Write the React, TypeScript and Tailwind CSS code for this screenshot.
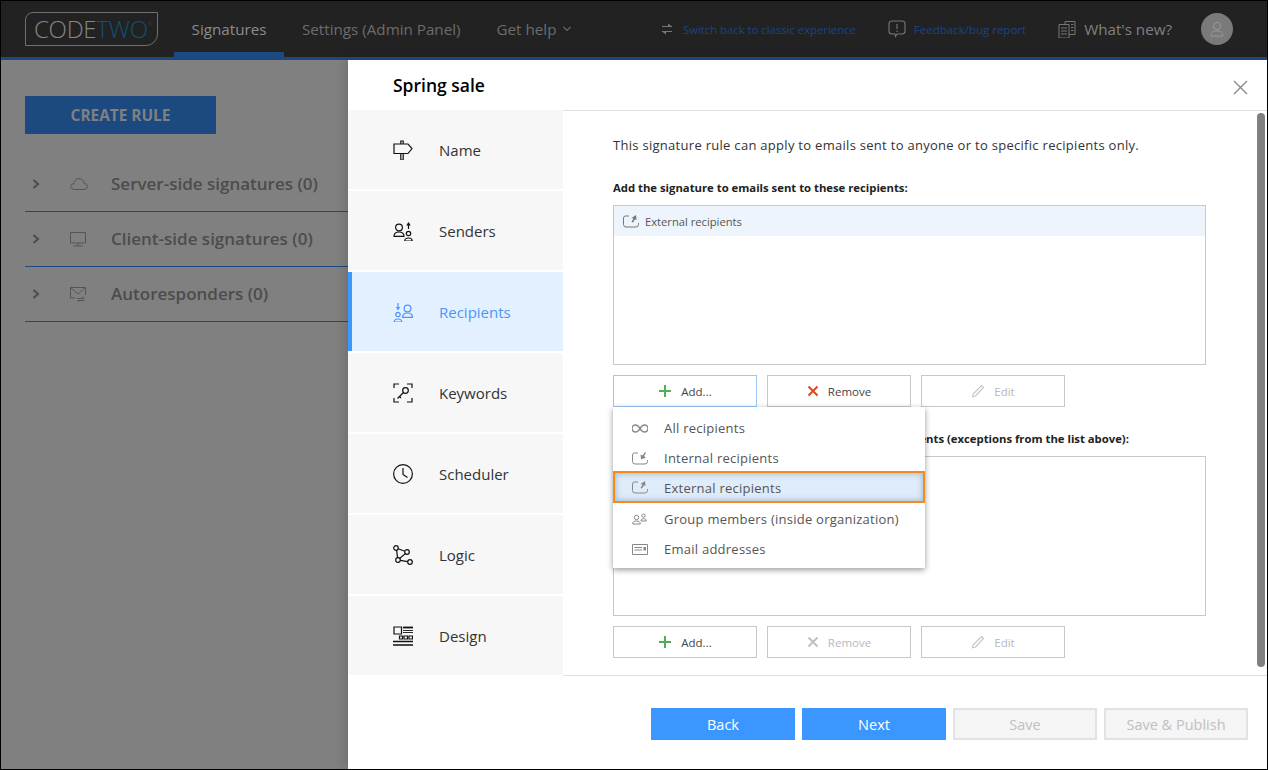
import React from "react";

const S = ({ w = 20, h = 20, vb, c = "currentColor", sw = 1.2, children, className = "" }: any) => (
  <svg width={w} height={h} viewBox={vb || `0 0 ${w} ${h}`} fill="none" stroke={c} strokeWidth={sw} className={`shrink-0 ${className}`}>
    {children}
  </svg>
);

const Person = ({ x, y, r = 3 }: any) => (
  <g>
    <circle cx={x} cy={y} r={r} />
    <path d={`M${x - r - 1.6} ${y + r + 5.5} c0 -3 1.5 -${r + 1} ${r + 1.6} -${r + 1} s${r + 1.6} 1 ${r + 1.6} ${r + 1} z`} />
  </g>
);

const NameIcon = () => (
  <S><path d="M1 4H15L19 8.5L15 13.5H1Z M7.8 4V1H10.2V4 M7.8 13.5V20H10.2V13.5" /></S>
);
const SendersIcon = () => (
  <S>
    <Person x={6} y={6.5} r={3.4} />
    <Person x={15.5} y={12.5} r={2.2} />
    <path d="M15.5 8V2" />
    <path d="M13.3 4.5L15.5 1L17.7 4.5Z" fill="currentColor" stroke="none" />
  </S>
);
const RecipientsIcon = () => (
  <S>
    <Person x={14.5} y={6.5} r={3.4} />
    <Person x={5} y={12.5} r={2.2} />
    <path d="M5 1V6" />
    <path d="M2.8 5L5 8.5L7.2 5Z" fill="currentColor" stroke="none" />
  </S>
);
const KeywordsIcon = () => (
  <S>
    <path d="M1 5V1H6 M14 1H19V5 M1 15V19H6 M14 19H19V15" />
    <circle cx="12.5" cy="7.5" r="2.8" />
    <path d="M10.5 9.5L4.5 15.5 M6.5 13.5L8 15" />
  </S>
);
const SchedulerIcon = () => (
  <S><circle cx="10" cy="10" r="9.4" /><path d="M10 4V10.5L14.5 13.5" /></S>
);
const LogicIcon = () => (
  <S>
    <circle cx="3" cy="3" r="2.3" /><circle cx="14" cy="7" r="2.3" /><circle cx="5" cy="15" r="2.3" /><circle cx="17" cy="17" r="2.3" />
    <path d="M5.2 3.8L11.8 6.2 M3.6 5.2L4.6 12.8 M12.3 8.6L6.6 13.5 M7.3 15.4L14.7 16.7" />
  </S>
);
const DesignIcon = () => (
  <S>
    <path d="M1 1H8.5V8H1Z" />
    <path d="M10 1.5H20" strokeWidth="1.8" />
    <path d="M10 4.5H20 M10 6.5H20" strokeWidth="0.9" />
    <path d="M6.5 10H9.5V13H6.5Z M11 10H14.5V13H11Z M16 10H19.5V13H16Z" />
    <path d="M0 15.5H20 M0 19H20" strokeWidth="1.3" />
  </S>
);

const BoxArrowIcon = ({ up = true, c = "#777" }: any) => (
  <S w={16} h={14} c={c} sw={1}>
    <path d="M6 2H2.5Q.5 2 .5 4V10.5Q.5 13 3 13H13Q15.5 13 15.5 10.5V9" />
    {up ? (
      <path d="M8.5 8L10.5 4.5L8.5 4L13 1L13.5 6L12 5.2L10 8.5Z" fill={c} stroke="none" />
    ) : (
      <path d="M9 8.5L8.5 3.5L10.5 4.5L13 1L14 2L12 5L14 6.5Z" fill={c} stroke="none" />
    )}
  </S>
);

const Pencil = () => (
  <S w={14} h={14} c="#c4c4c4" sw={1.1}>
    <path d="M10.5 1.5L12.5 3.5L4.5 12L1.5 12.8L2.3 9.8Z" />
  </S>
);

const Plus = () => (
  <S w={14} h={14} c="#4fae50" sw={2}><path d="M7 1V13M1 7H13" /></S>
);
const Cross = ({ c }: any) => (
  <S w={12} h={12} c={c} sw={2}><path d="M1.5 1.5L10.5 10.5M10.5 1.5L1.5 10.5" /></S>
);

const ToolBtn = ({ icon, label, off, active }: any) => (
  <div className={`w-36 h-8 border ${active ? "border-[#9cc8f8]" : "border-[#c8c8c8]"} bg-white flex items-center justify-center gap-[9px] text-[11.5px] ${off ? "text-[#b8b8b8]" : "text-[#444]"}`}>
    {icon}
    <span className="pt-[2px]">{label}</span>
  </div>
);

const navItems = [
  ["Name", <NameIcon />],
  ["Senders", <SendersIcon />],
  ["Recipients", <RecipientsIcon />],
  ["Keywords", <KeywordsIcon />],
  ["Scheduler", <SchedulerIcon />],
  ["Logic", <LogicIcon />],
  ["Design", <DesignIcon />],
] as const;

const LeftRow = ({ icon, label }: any) => (
  <div className="h-[55px] border-b border-[#1c4a80] flex items-center text-[#4c4c4c]">
    <span className="w-[33px] pl-[7px]">
      <svg width="8" height="10" viewBox="0 0 8 10" fill="none" stroke="#4c4c4c" strokeWidth="2"><path d="M1.5 1L6 5L1.5 9" /></svg>
    </span>
    <span className="w-[53px] pl-[12px] flex">{icon}</span>
    <span className="text-[17px] font-semibold">{label}</span>
  </div>
);

const MenuItem = ({ icon, label, hi }: any) => (
  <div className={`flex items-center text-[13px] tracking-[0.25px] text-[#555] ${hi ? "h-[32px] border-2 border-[#f58a1f] bg-[#dfecfa] shadow-[inset_0_0_6px_rgba(90,120,160,0.55)] -mt-[2px] mb-px relative" : "h-[30px]"}`}>
    <span className={`flex w-[51px] justify-start ${hi ? "pl-[17px]" : "pl-[19px]"}`}>{icon}</span>
    <span className={hi ? "-ml-[2px] pt-[4px]" : "pt-[2px]"}>{label}</span>
  </div>
);

export default function App() {
  return (
    <div className="w-[1268px] h-[770px] overflow-hidden flex flex-col border border-black bg-white" style={{ fontFamily: '"Open Sans", "Noto Sans", sans-serif' }}>
      {/* Top bar */}
      <header className="h-[59px] shrink-0 bg-[#222222] border-b-[3px] border-[#1c4a80] flex items-stretch">
        <div className="ml-6 mt-[11px] h-[34px] w-[133px] border border-[#707070] rounded-tl-[8px] rounded-br-[12px] flex items-center pl-[8px] text-[24px] font-light tracking-[-0.3px] text-[#858585] leading-none">
          CODE<span className="text-[#124f72]">TWO</span>
          <span className="text-[6px] text-[#444] self-start mt-[8px]">®</span>
        </div>
        <nav className="ml-4 flex items-stretch text-[15.2px] text-[#6c6c6c]">
          <div className="w-[110px] flex items-center justify-center text-[#8c8c8c] border-b-[5px] border-[#1c4a80] pt-[5px]">Signatures</div>
          <div className="ml-[18px] flex items-center">Settings (Admin Panel)</div>
          <div className="ml-9 flex items-center gap-[7px]">
            Get help
            <svg width="8" height="6" viewBox="0 0 8 6" fill="none" stroke="#666" strokeWidth="1.2"><path d="M.5 1L4 4.5L7.5 1" /></svg>
          </div>
        </nav>
        <div className="ml-auto flex items-center text-[#6c6c6c]">
          <S w={12} h={12} c="#777" sw={1.2}><path d="M1 3.5H11M1 8.5H11" /><path d="M7 0.5L11 3.5L7 3.5Z M5 11.5L1 8.5L5 8.5Z" fill="#777" stroke="none" /></S>
          <span className="ml-[10px] text-[11.3px] text-[#1c4480] pt-[2px]">Switch back to classic experience</span>
          <S w={18} h={18} c="#777" sw={1.1} className="ml-8">
            <path d="M4 1H14Q17 1 17 4V11Q17 14 14 14H9L7.5 16.5L7 14H4Q1 14 1 11V4Q1 1 4 1Z" />
            <path d="M9 4V9M9 10.5V12" />
          </S>
          <span className="ml-[8px] text-[11.5px] text-[#1c4480] pt-[2px]">Feedback/bug report</span>
          <S w={18} h={18} c="#777" sw={1} className="ml-8">
            <path d="M1 4.5H11V18H1Z M7 4.5V1.5H17V14.5H11 M3 8H9 M3 11H9 M3 14H9 M13 4.5H15.5 M13 7.5H15.5 M13 10.5H15.5" />
          </S>
          <span className="ml-2 text-[15.2px] text-[#808080]">What's new?</span>
          <div className="ml-[29px] mr-[34px] w-8 h-8 rounded-full bg-[#7a7a7a] flex items-center justify-center">
            <S w={14} h={16} c="#999" sw={1}><circle cx="7" cy="5" r="3.6" /><path d="M1 15C1 11 3.5 10 7 10S13 11 13 15Z" /></S>
          </div>
        </div>
      </header>

      <main className="flex-1 min-h-0 flex">
        {/* Dimmed page */}
        <aside className="w-[347px] shrink-0 bg-[#808080] pl-6 pt-9">
          <div className="w-[191px] h-[38px] pt-[2px] bg-[#1c4a80] flex items-center justify-center text-[15.4px] font-bold text-[#808080]">CREATE RULE</div>
          <div className="mt-[23px]">
            <LeftRow label="Server-side signatures (0)" icon={<S w={18} h={14} c="#555" sw={1}><path d="M4.5 12.5H14Q17.5 12.5 17.5 9.5T14 6.5Q13 1.5 9 1.5T4 6.5Q.5 7 .5 9.5T4.5 12.5Z" /></S>} />
            <LeftRow label="Client-side signatures (0)" icon={<S w={16} h={15} c="#555" sw={1}><path d="M.5 .5H15.5V11H.5Z M8 11V14 M3.5 14H12.5" /></S>} />
            <LeftRow label="Autoresponders (0)" icon={<S w={16} h={15} c="#555" sw={1}><path d="M5 11H.5V.5H15.5V8 M.5 .5L8 7L15.5 .5 M7 11.5H14L12 9.5 M14.5 13.5H7.5L9 14.8" /></S>} />
          </div>
        </aside>

        {/* Dialog */}
        <section className="flex-1 min-w-0 bg-white flex flex-col relative shadow-[-4px_0_10px_rgba(0,0,0,0.12)]">
          <div className="h-[50px] shrink-0 flex items-center justify-between pl-[45px] pr-[19px]">
            <h1 className="text-[17.5px] font-semibold text-black">Spring sale</h1>
            <S w={15} h={15} c="#8a8a8a" sw={1.4} className="mt-[5px]"><path d="M1 1L14 14M14 1L1 14" /></S>
          </div>

          <div className="h-[565px] shrink-0 flex">
            {/* Steps */}
            <nav className="w-[215px] shrink-0 flex flex-col gap-[2px]">
              {navItems.map(([label, icon]) => {
                const active = label === "Recipients";
                return (
                  <div key={label} className={`h-[79px] flex items-center text-[15px] ${active ? "bg-[#e3f0ff] border-l-4 border-[#3b96ff] pl-[41px] text-[#4a96ff]" : "pl-[45px] bg-[#f7f7f7] text-[#333]"}`}>
                    <span className={`w-[46px] flex ${active ? "" : "text-[#111]"}`}>{icon}</span>
                    <span className="pt-[2px]">{label}</span>
                  </div>
                );
              })}
            </nav>

            {/* Recipients pane */}
            <div className="flex-1 min-w-0 border-y border-[#e0e0e0] h-[566px] pl-[50px] pt-[26px] relative">
              <p className="text-[13px] tracking-[0.29px] text-[#333] leading-[16px]">This signature rule can apply to emails sent to anyone or to specific recipients only.</p>
              <p className="mt-[27px] text-[11.3px] font-bold text-[#222] leading-[16px]">Add the signature to emails sent to these recipients:</p>
              <div className="mt-[9px] w-[593px] h-[160px] border border-[#c8c8c8]">
                <div className="h-[30px] bg-[#edf4fc] flex items-center pl-[9px] gap-[6px] text-[11.2px] text-[#555]">
                  <BoxArrowIcon />
                  <span className="pt-[2px]">External recipients</span>
                </div>
              </div>
              <div className="mt-[10px] flex gap-[10px]">
                <ToolBtn active icon={<Plus />} label="Add..." />
                <ToolBtn icon={<Cross c="#e0471b" />} label="Remove" />
                <ToolBtn off icon={<Pencil />} label="Edit" />
              </div>
              <p className="mt-[24px] text-[11.3px] font-bold text-[#222] leading-[16px]">Do not add the signature to emails sent to these recipients (exceptions from the list above):</p>
              <div className="mt-[9px] w-[593px] h-[160px] border border-[#c8c8c8]" />
              <div className="mt-[10px] flex gap-[10px]">
                <ToolBtn icon={<Plus />} label="Add..." />
                <ToolBtn off icon={<Cross c="#c0c0c0" />} label="Remove" />
                <ToolBtn off icon={<Pencil />} label="Edit" />
              </div>

              {/* Scrollbar */}
              <div className="absolute right-[2px] top-[2px] w-2 h-[554px] rounded bg-[#808080]" />

              {/* Dropdown menu */}
              <div className="absolute left-[50px] top-[296px] w-[312px] h-[161px] bg-white shadow-[0_2px_6px_rgba(0,0,0,0.4)] pt-[6px]">
                <MenuItem label="All recipients" icon={<S w={16} h={9} c="#888" sw={1.5}><path d="M8 4.5C6 1 4.5 1 3.5 1A3.5 3.5 0 0 0 3.5 8C4.5 8 6 8 8 4.5C10 1 11.5 1 12.5 1A3.5 3.5 0 0 1 12.5 8C11.5 8 10 8 8 4.5Z" /></S>} />
                <MenuItem label="Internal recipients" icon={<BoxArrowIcon up={false} c="#888" />} />
                <MenuItem hi label="External recipients" icon={<BoxArrowIcon c="#888" />} />
                <MenuItem label="Group members (inside organization)" icon={<S w={15} h={12} c="#888" sw={1}><circle cx="4.5" cy="4.5" r="2.2" /><path d="M.7 11C.7 8.5 2.5 8 4.5 8S8.3 8.5 8.3 11Z" /><circle cx="11.5" cy="2.7" r="1.7" /><path d="M9 8C9 6 10 5.8 11.5 5.8S14.3 6 14.3 8Z" /></S>} />
                <MenuItem label="Email addresses" icon={<S w={16} h={11} c="#888" sw={1}><path d="M.5 .5H15.5V10.5H.5Z M2.5 3.5H10 M2.5 6H10" /><path d="M11.5 3H14V6.5H11.5Z" fill="#888" stroke="none" /></S>} />
              </div>
            </div>
          </div>

          {/* Footer */}
          <footer className="flex-1 flex items-start justify-end gap-[7px] pt-[33px] pr-[19px] text-[14.5px]">
            <button className="w-36 h-8 pt-[2px] bg-[#3b96ff] text-white">Back</button>
            <button className="w-36 h-8 pt-[2px] bg-[#3b96ff] text-white">Next</button>
            <button className="w-36 h-8 pt-[2px] bg-[#f5f5f5] border-2 border-[#e2e2e2] text-[#c0c0c0]">Save</button>
            <button className="w-36 h-8 pt-[2px] bg-[#f5f5f5] border-2 border-[#e2e2e2] text-[#c0c0c0]">Save &amp; Publish</button>
          </footer>
        </section>
      </main>
    </div>
  );
}
